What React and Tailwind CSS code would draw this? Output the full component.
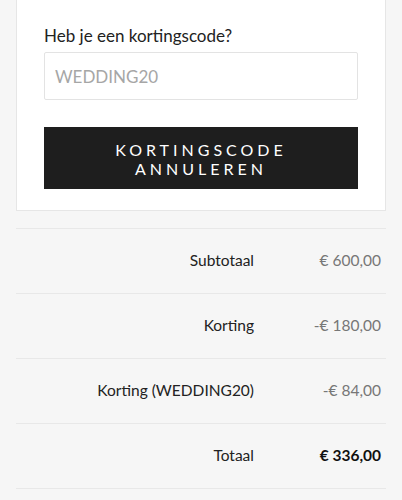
import React from "react";

const rows = [
  { label: "Subtotaal", value: "€ 600,00" },
  { label: "Korting", value: "-€ 180,00" },
  { label: "Korting (WEDDING20)", value: "-€ 84,00" },
  { label: "Totaal", value: "€ 336,00", strong: true },
];

const App = () => {
  return (
    <div className="min-h-[500px] bg-[#f6f6f6] px-4 font-['Lato','Liberation_Sans',sans-serif]">
      {/* Coupon card */}
      <div className="bg-white border-x border-b border-[#e6e6e6] px-[27px] pt-6 pb-[21px]">
        <h3 className="text-[17px] leading-6 text-[#222] mb-1">Heb je een kortingscode?</h3>
        <input
          type="text"
          placeholder="WEDDING20"
          className="w-full h-[48px] border border-[#e3e3e3] rounded-[2px] px-[10px] text-[17px] text-[#222] placeholder:text-[#a6a6a6] outline-none"
        />
        <button className="mt-[27px] w-full h-[62px] bg-[#1e1e1e] text-white text-[16px] leading-[19px] tracking-[0.25em] uppercase flex flex-col items-center justify-center pt-[2px]">
          <span>Kortingscode</span>
          <span>Annuleren</span>
        </button>
      </div>

      {/* Totals */}
      <div className="mt-[17px] border-t border-[#e8e8e8]">
        {rows.map((row) => (
          <div key={row.label} className="flex items-center h-[65px] border-b border-[#e8e8e8] text-[15.5px]">
            <div className="flex-1 text-right text-[#222]">{row.label}</div>
            <div
              className={
                row.strong
                  ? "w-[132px] pr-[5px] text-right font-bold text-[#111]"
                  : "w-[132px] pr-[5px] text-right text-[#777]"
              }
            >
              {row.value}
            </div>
          </div>
        ))}
      </div>
    </div>
  );
};

export default App;
